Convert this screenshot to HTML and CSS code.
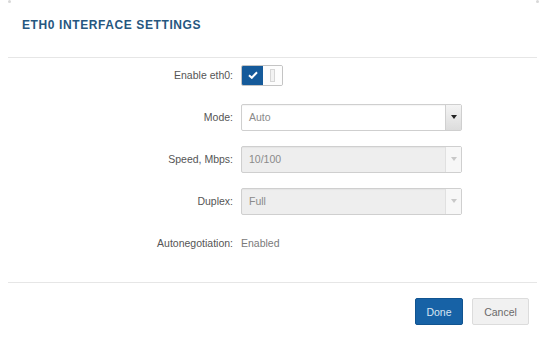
FILE: index.html
```html
<!DOCTYPE html>
<html>
<head>
<meta charset="utf-8">
<link rel="stylesheet" href="styles.css">
</head>
<body>
<div class="modal">
  <div class="modal-header">
    <h2 class="title">ETH0 INTERFACE SETTINGS</h2>
  </div>
  <div class="modal-body">
    <div class="row">
      <label class="lbl">Enable eth0:</label>
      <div class="toggle">
        <span class="toggle-on">
          <svg width="10" height="8" viewBox="0 0 10 8"><path d="M1 4.2 L3.8 6.8 L9 1.2" fill="none" stroke="#fff" stroke-width="2"/></svg>
        </span>
        <span class="toggle-off"><span class="handle"></span></span>
      </div>
    </div>
    <div class="row">
      <label class="lbl">Mode:</label>
      <div class="select">
        <span class="sel-text">Auto</span>
        <span class="sel-arrow"><span class="tri"></span></span>
      </div>
    </div>
    <div class="row">
      <label class="lbl">Speed, Mbps:</label>
      <div class="select disabled">
        <span class="sel-text">10/100</span>
        <span class="sel-arrow"><span class="tri"></span></span>
      </div>
    </div>
    <div class="row">
      <label class="lbl">Duplex:</label>
      <div class="select disabled">
        <span class="sel-text">Full</span>
        <span class="sel-arrow"><span class="tri"></span></span>
      </div>
    </div>
    <div class="row">
      <label class="lbl">Autonegotiation:</label>
      <span class="value">Enabled</span>
    </div>
  </div>
  <div class="modal-footer">
    <button class="btn btn-primary">Done</button>
    <button class="btn btn-default">Cancel</button>
  </div>
</div>
</body>
</html>
```

FILE: styles.css
```css
html, body {
  margin: 0;
  padding: 0;
  background: #ffffff;
}
body {
  font-family: "Liberation Sans", Arial, sans-serif;
  width: 545px;
  height: 339px;
  overflow: hidden;
}
.modal {
  position: relative;
  width: 545px;
  height: 339px;
}
.modal::before,
.modal::after {
  content: "";
  position: absolute;
  top: 0;
  width: 3px;
  height: 3px;
  background: #d8d8d8;
  border-radius: 50%;
}
.modal::before { left: 8px; }
.modal::after { right: 6px; }
.modal-header {
  margin: 0 8px;
  padding: 15px 14px 22px;
  border-bottom: 1px solid #e6e6e6;
}
.title {
  margin: 0;
  font-size: 12px;
  line-height: 20px;
  font-weight: bold;
  color: #26577f;
  letter-spacing: 0.6px;
}
.modal-body {
  padding: 3px 0 25px;
  display: flex;
  flex-direction: column;
  gap: 14px;
}
.row {
  display: flex;
  align-items: center;
  height: 28px;
  gap: 8px;
}
.lbl {
  width: 233px;
  text-align: right;
  font-size: 10.5px;
  color: #555555;
}
.value {
  font-size: 10.5px;
  color: #7a7a7a;
}
.toggle {
  display: flex;
  width: 40px;
  height: 19px;
  border: 1px solid #c4c4c4;
  border-radius: 2px;
  overflow: hidden;
}
.toggle-on {
  width: 21px;
  background: #155a9a;
  display: flex;
  align-items: center;
  justify-content: center;
}
.toggle-off {
  flex: 1;
  background: #fdfdfd;
  display: flex;
  align-items: center;
  justify-content: center;
}
.handle {
  width: 3px;
  height: 11px;
  border: 1px solid #d6d6d6;
  background: #f2f2f2;
}
.select {
  width: 221px;
  height: 27px;
  box-sizing: border-box;
  border: 1px solid #cfcfcf;
  border-radius: 2px;
  display: flex;
  align-items: center;
  background: #ffffff;
  box-shadow: inset 0 1px 1px rgba(0,0,0,0.04);
}
.select.disabled {
  background: #eeeeee;
}
.sel-text {
  flex: 1;
  padding-left: 7px;
  font-size: 10.5px;
  color: #8a8a8a;
}
.sel-arrow {
  width: 15px;
  align-self: stretch;
  border-left: 1px solid #d0d0d0;
  background: linear-gradient(#f4f4f4, #dcdcdc);
  display: flex;
  align-items: center;
  justify-content: center;
}
.disabled .sel-arrow {
  background: #f7f7f7;
  border-left-color: #e0e0e0;
}
.tri {
  width: 0;
  height: 0;
  border-left: 3px solid transparent;
  border-right: 3px solid transparent;
  border-top: 4px solid #222;
}
.disabled .tri {
  border-top-color: #c8c8c8;
}
.modal-footer {
  margin: 0 8px;
  border-top: 1px solid #e6e6e6;
  padding: 15px 8px 0 0;
  display: flex;
  justify-content: flex-end;
  gap: 9px;
}
.btn {
  height: 27px;
  border-radius: 2px;
  font-family: "Liberation Sans", Arial, sans-serif;
  font-size: 10.5px;
  padding: 0;
  cursor: pointer;
}
.btn-primary {
  width: 48px;
  background: #1762a6;
  border: 1px solid #115490;
  color: #d8e6f3;
}
.btn-default {
  width: 57px;
  background: #f1f1f1;
  border: 1px solid #dcdcdc;
  color: #6a6a6a;
}
```
